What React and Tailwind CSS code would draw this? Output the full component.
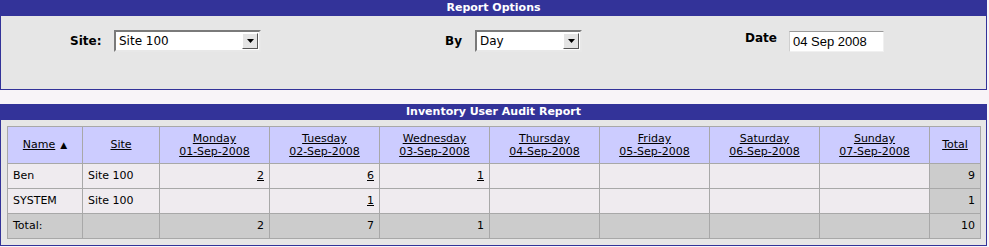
import React from 'react';

const days = [
  ['Monday', '01-Sep-2008'],
  ['Tuesday', '02-Sep-2008'],
  ['Wednesday', '03-Sep-2008'],
  ['Thursday', '04-Sep-2008'],
  ['Friday', '05-Sep-2008'],
  ['Saturday', '06-Sep-2008'],
  ['Sunday', '07-Sep-2008'],
];

const rows = [
  { name: 'Ben', site: 'Site 100', counts: ['2', '6', '1', '', '', '', ''], total: '9' },
  { name: 'SYSTEM', site: 'Site 100', counts: ['', '1', '', '', '', '', ''], total: '1' },
];

const totals = ['2', '7', '1', '', '', '', ''];

function Select({ value, width }) {
  return (
    <div
      className={`flex h-[22px] items-stretch bg-white border-2 border-t-[#7a7a7a] border-l-[#7a7a7a] border-b-[#e8e8e8] border-r-[#e8e8e8] ${width}`}
    >
      <div className="flex-1 pl-[3px] text-[12px] leading-[18px] text-black">{value}</div>
      <div className="my-[1px] mr-[1px] flex w-[16px] items-center justify-center bg-[#e4e4e4] border border-t-white border-l-white border-b-[#555] border-r-[#555]">
        <svg width="7" height="4" viewBox="0 0 7 4">
          <polygon points="0,0 7,0 3.5,4" fill="#000" />
        </svg>
      </div>
    </div>
  );
}

function PanelHeader({ children }) {
  return (
    <div className="h-[16px] bg-[#333399] text-center text-[11px] font-bold leading-[16px] text-white">
      {children}
    </div>
  );
}

export default function App() {
  const cell = 'border border-[#a8a8a8] h-[25px] px-[5px]';
  return (
    <div
      className="w-[989px] h-[247px] bg-[#f8f4f8] text-[11px] text-black"
      style={{ fontFamily: '"DejaVu Sans", Verdana, sans-serif' }}
    >
      <div className="w-[987px]">
        <PanelHeader>Report Options</PanelHeader>
        <div className="h-[74px] bg-[#e6e6e6] border border-t-0 border-[#333399] pt-[14px]">
          <div className="flex items-center">
            <div className="ml-[69px] w-[44px] font-bold text-[12px]">Site:</div>
            <Select value="Site 100" width="w-[147px]" />
            <div className="ml-[184px] w-[30px] font-bold text-[12px]">By</div>
            <Select value="Day" width="w-[107px]" />
            <div className="ml-[163px] w-[44px] -mt-[6px] font-bold text-[12px]">Date</div>
            <div
              className="w-[95px] h-[21px] bg-white border border-t-[#9a9a9a] border-l-[#cfcfcf] border-b-[#f0f0f0] border-r-[#f0f0f0] pl-[3px] text-[13px] leading-[19px]"
              style={{ fontFamily: '"Liberation Sans", Arial, sans-serif' }}
            >
              04 Sep 2008
            </div>
          </div>
        </div>
      </div>

      <div className="mt-[14px] w-[987px]">
        <PanelHeader>Inventory User Audit Report</PanelHeader>
        <div className="bg-[#e6e6e6] border border-t-0 border-[#333399] px-[6px] pt-[6px] pb-[6px]">
          <table className="w-[973px] border-collapse table-fixed">
            <colgroup>
              <col className="w-[75px]" />
              <col className="w-[77px]" />
              {days.map((d) => (
                <col key={d[0]} className="w-[110px]" />
              ))}
              <col className="w-[51px]" />
            </colgroup>
            <thead>
              <tr className="bg-[#ccccff] h-[37px]">
                <th className="border border-[#a8a8a8] font-normal">
                  <span className="underline">Name</span>
                  <span className="ml-[5px] text-[9px]">▲</span>
                </th>
                <th className="border border-[#a8a8a8] font-normal underline">Site</th>
                {days.map((d) => (
                  <th key={d[0]} className="border border-[#a8a8a8] font-normal leading-[13px] underline">
                    {d[0]}
                    <br />
                    {d[1]}
                  </th>
                ))}
                <th className="border border-[#a8a8a8] font-normal underline">Total</th>
              </tr>
            </thead>
            <tbody>
              {rows.map((r) => (
                <tr key={r.name} className="bg-[#efebef]">
                  <td className={cell}>{r.name}</td>
                  <td className={cell}>{r.site}</td>
                  {r.counts.map((c, i) => (
                    <td key={i} className={`${cell} text-right underline`}>
                      {c}
                    </td>
                  ))}
                  <td className={`${cell} text-right bg-[#cccccc]`}>{r.total}</td>
                </tr>
              ))}
              <tr className="bg-[#cccccc]">
                <td className={cell}>Total:</td>
                <td className={cell}></td>
                {totals.map((c, i) => (
                  <td key={i} className={`${cell} text-right`}>
                    {c}
                  </td>
                ))}
                <td className={`${cell} text-right`}>10</td>
              </tr>
            </tbody>
          </table>
        </div>
      </div>
    </div>
  );
}
